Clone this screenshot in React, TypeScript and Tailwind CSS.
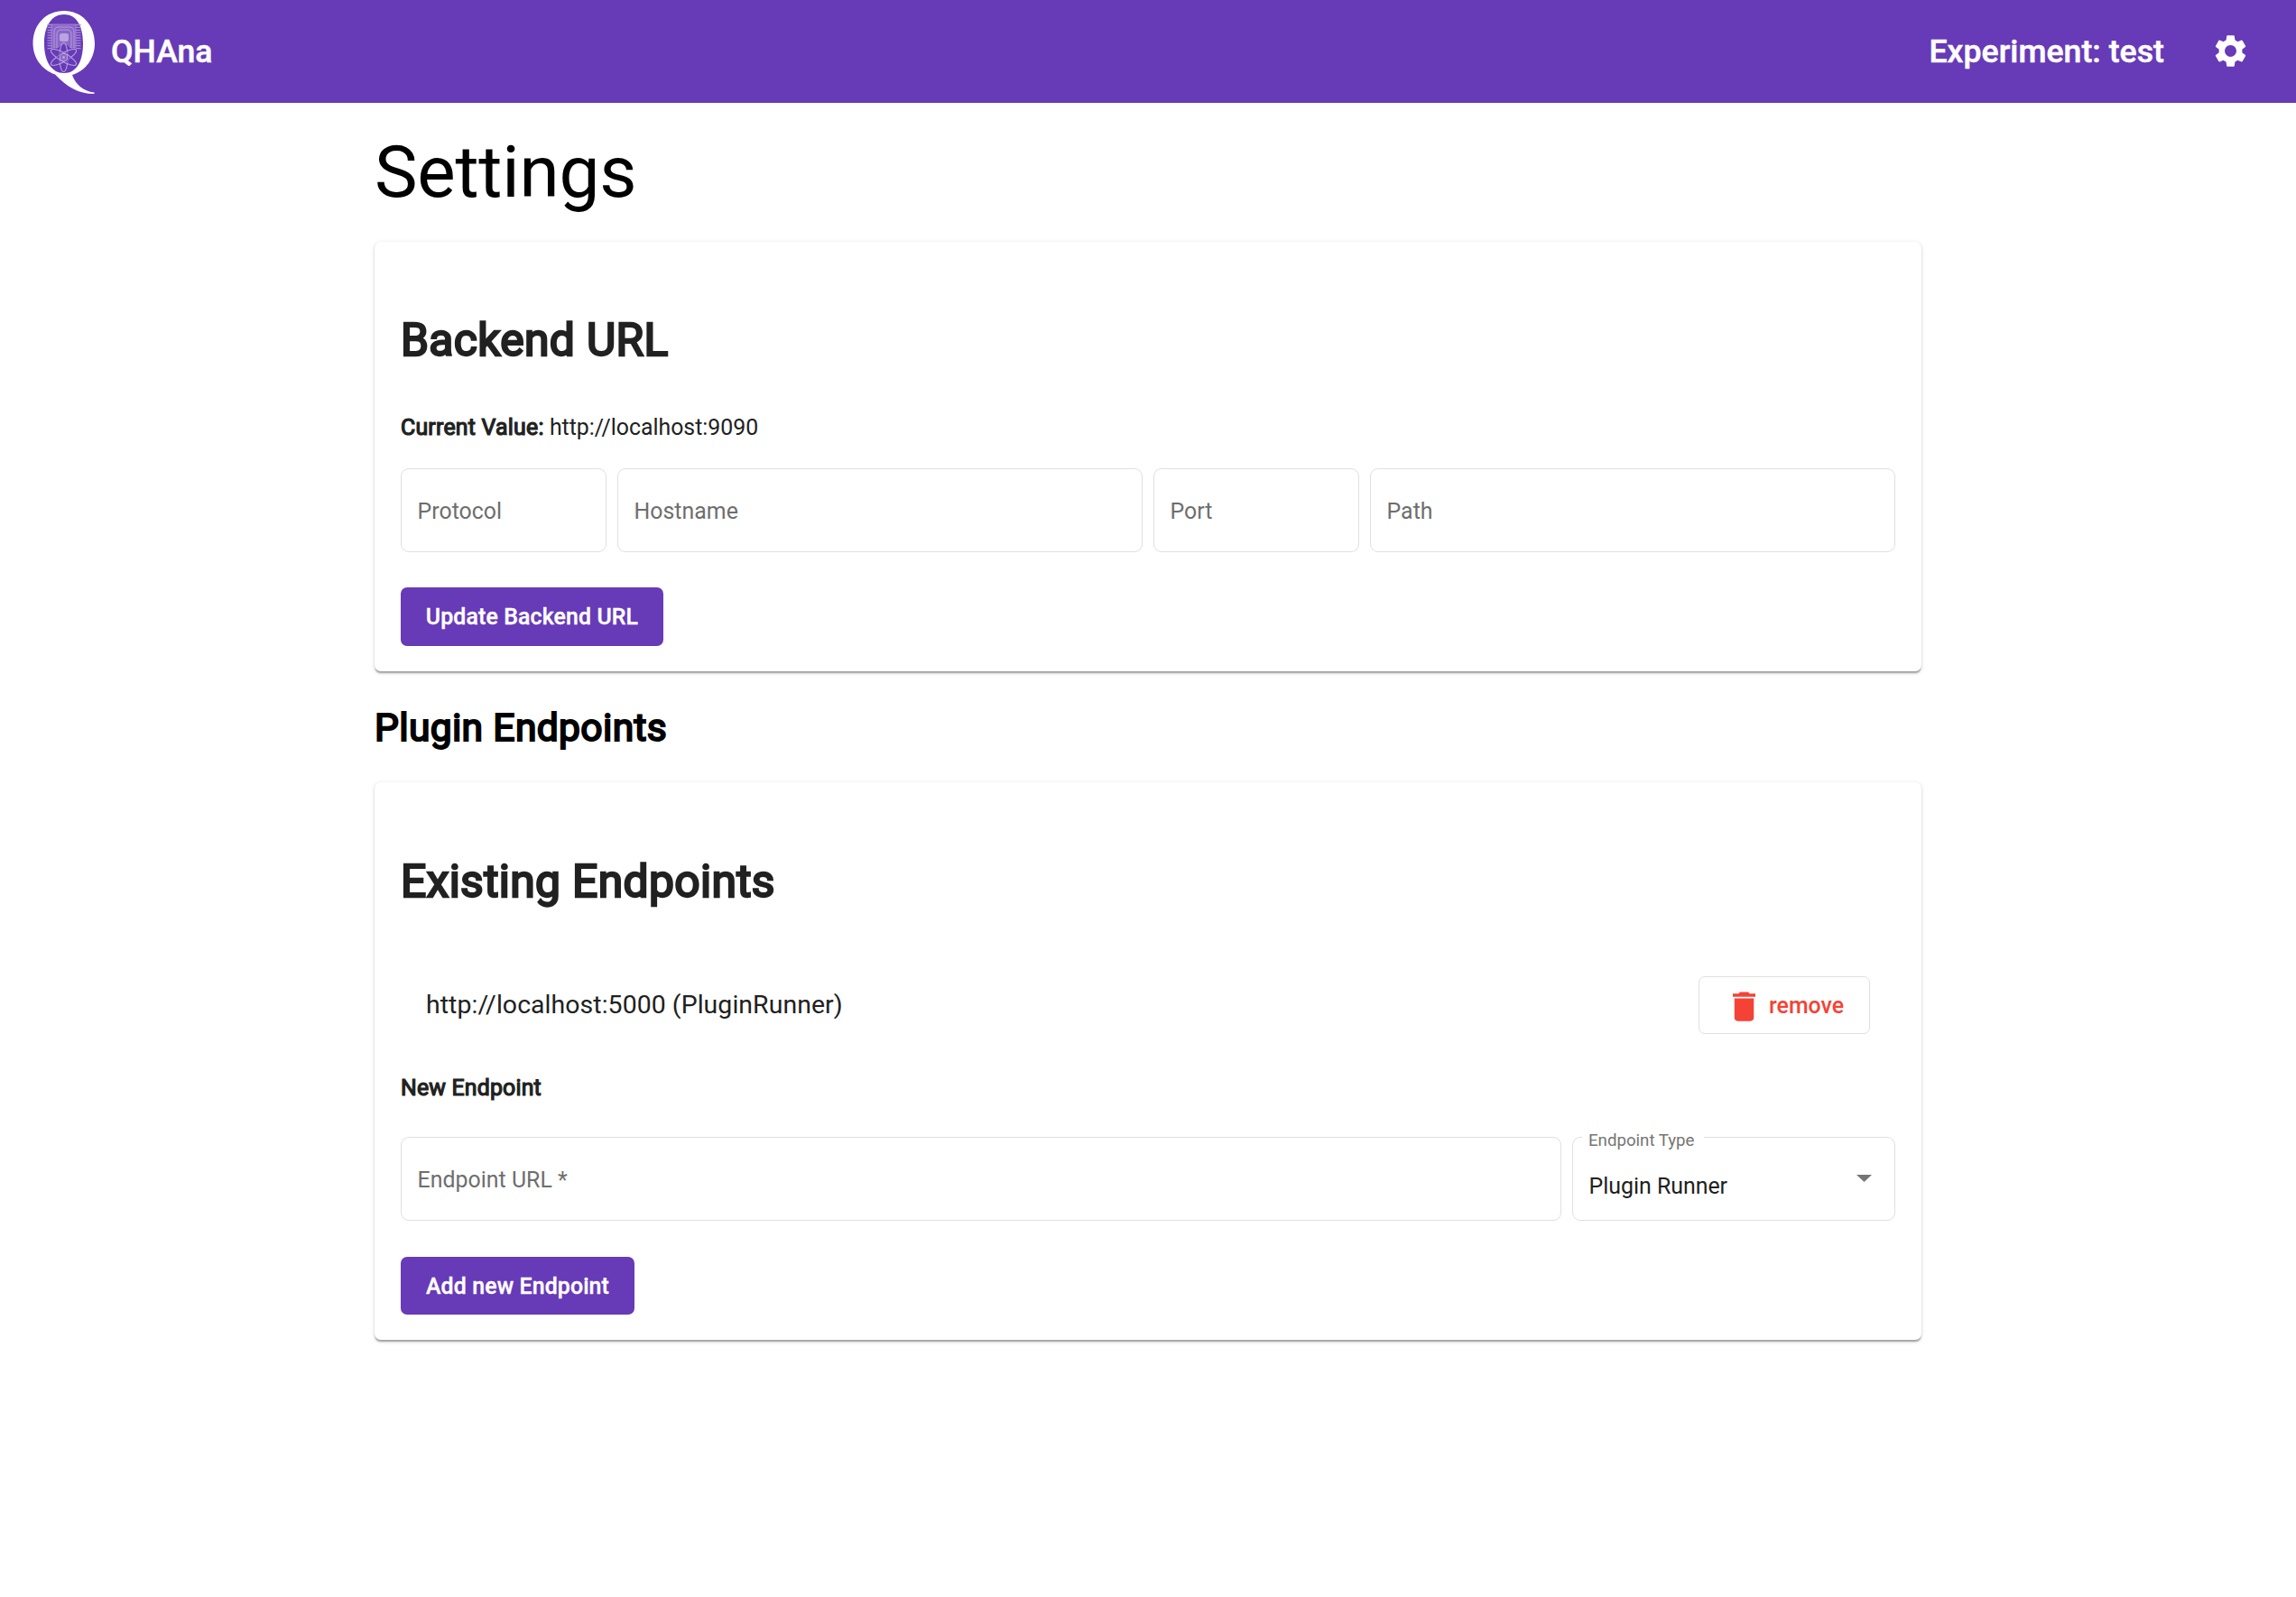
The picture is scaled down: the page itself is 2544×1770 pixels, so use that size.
import React from "react";
import { MdDelete, MdSettings } from "react-icons/md";

const orbitAngles = [0, 60, 120];
const pinRows = [0, 1, 2, 3, 4, 5, 6, 7, 8, 9];

function Logo() {
  return (
    <svg className="block h-[104px] w-[84px]" viewBox="30 5 84 104" fill="none">
      <path
        fill="#fff"
        fillRule="evenodd"
        d="M71 12C90 12 105 27 105 48C105 64 96 78 80 83C84 94 92 101 104.500 102.500V104C86 104 74 96 61 82.500C46 77 36.500 64 36.500 48C36.500 27 51 12 71 12ZM71 16C57 16 49 29 49 48C49 68 57 81 71 81C85 81 92 68 92 48C92 29 85 16 71 16Z"
      />
      <g stroke="#a78bd6">
        <path d="M57 27h27v26h-6l-3-4h-8l-3 4h-7z" fill="#8a66c8" strokeWidth="0.800" />
        <path
          d="M60 53V35q0-5 5-5h12q5 0 5 5v18M63 53V38q0-5 5-5h6q5 0 5 5v15"
          stroke="#b9a3e0"
          strokeWidth="0.900"
        />
        <rect x="66" y="37" width="10" height="9" rx="2.500" fill="#b9a3e0" stroke="none" />
        {pinRows.map((i) => (
          <path
            key={i}
            d={`M52.500 ${27.500 + i * 2.900}h5M84 ${27.500 + i * 2.900}h5.500`}
            strokeWidth="1.300"
          />
        ))}
      </g>
      <g stroke="#b9a3e0" strokeWidth="1.100">
        {orbitAngles.map((a) => (
          <ellipse
            key={a}
            cx="70.500"
            cy="63.500"
            rx="4.600"
            ry="16"
            fill="#673ab7"
            fillOpacity="0.500"
            transform={`rotate(${a} 70.500 63.500)`}
          />
        ))}
        <circle cx="70.500" cy="63.500" r="4.200" fill="#8a66c8" />
        <circle cx="70.500" cy="63.500" r="1.500" fill="#b9a3e0" stroke="none" />
      </g>
    </svg>
  );
}

function Field({ label, className }: { label: string; className: string }) {
  return (
    <div
      className={`flex h-[93px] items-center rounded-[9px] border border-[#e0e0e0] pl-[17.500px] text-[24.890px] text-[#6e6e6e] ${className}`}
    >
      <span className="mt-[2px] tracking-[0.001em]">{label}</span>
    </div>
  );
}

const card =
  "flex flex-col rounded-[7px] bg-white px-[29px] text-[#212121] shadow-[0_3.500px_1.800px_-1.800px_rgba(0,0,0,0.2),0_1.800px_1.800px_0_rgba(0,0,0,0.14),0_1.800px_5.300px_0_rgba(0,0,0,0.12)]";
const mediumText = "font-medium [-webkit-text-stroke:0.015em_currentColor]";
const primary = `flex items-center justify-center self-start rounded-[7px] bg-[#673ab7] pt-px text-[24.890px] tracking-[0.005em] text-white ${mediumText}`;
const heavy = "[-webkit-text-stroke:0.048em_currentColor] tracking-[0.007em]";

export default function App() {
  return (
    <div className="min-h-[1770px] bg-white font-['Roboto',sans-serif] text-black">
      <header
        className={`flex h-[114px] items-center bg-[#673ab7] pl-[30px] pr-[51px] text-[35.560px] tracking-[0.002em] text-white ${mediumText}`}
      >
        <Logo />
        <span className="ml-[9px] mt-[2px]">QHAna</span>
        <span className="ml-auto mt-[2px]">Experiment: test</span>
        <MdSettings className="mb-px ml-[52px] size-[43px]" strokeWidth={0} />
      </header>
      <main className="mx-auto w-[1714px]">
        <h1 className="flex h-[154px] items-center text-[80px] leading-none tracking-[-0.003em]">
          <span>Settings</span>
        </h1>
        <section className={`h-[476px] ${card}`}>
          <h2 className={`mt-[79px] text-[49.780px] leading-[60px] ${heavy}`}>Backend URL</h2>
          <p className="mt-[51px] text-[24.890px] leading-[32px]">
            <b className="font-normal tracking-[0.009em] [-webkit-text-stroke:0.048em_currentColor]">Current Value:</b>{" "}
            http://localhost:9090
          </p>
          <div className="mt-[29px] flex gap-3">
            <Field label="Protocol" className="w-[228px]" />
            <Field label="Hostname" className="w-[582px]" />
            <Field label="Port" className="w-[228px]" />
            <Field label="Path" className="w-[582px]" />
          </div>
          <button className={`mt-[39px] h-[65px] w-[291px] ${primary}`}>Update Backend URL</button>
        </section>
        <h2 className={`flex h-[123px] items-center pt-px text-[42.670px] leading-none ${heavy}`}>
          <span>Plugin Endpoints</span>
        </h2>
        <section className={`h-[618px] ${card}`}>
          <h2 className={`mt-[80px] text-[49.780px] leading-[60px] ${heavy}`}>Existing Endpoints</h2>
          <div className="mt-[75px] flex h-[64px] items-center justify-between px-[28px]">
            <span className="text-[28.440px] tracking-[0.002em]">http://localhost:5000 (PluginRunner)</span>
            <button className="flex h-[64px] w-[190px] items-center rounded-[7px] border border-[#e0e0e0] pl-[28px] pt-[2px] text-[24.890px] font-medium text-[#f44336]">
              <MdDelete className="size-[43px]" strokeWidth={0} />
              <span className="ml-[6px]">remove</span>
            </button>
          </div>
          <h3 className={`mt-[44px] text-[24.890px] leading-[32px] ${heavy}`}>New Endpoint</h3>
          <div className="mt-[38px] flex gap-3">
            <Field label="Endpoint URL *" className="w-[1286px]" />
            <div className="relative flex h-[93px] w-[358px] items-center justify-between rounded-[9px] border border-[#e0e0e0] pl-[17.500px] pr-[25px]">
              <span className="absolute -top-[8px] left-[10px] bg-white pl-[7px] pr-[11px] text-[18.670px] leading-[22px] text-[#757575]">
                Endpoint Type
              </span>
              <span className="mt-[17px] text-[24.890px]">Plugin Runner</span>
              <svg className="mb-px h-[8px] w-[17px]" viewBox="0 0 17 8">
                <path d="M0 0h17L8.500 8z" fill="#757575" />
              </svg>
            </div>
          </div>
          <button className={`mt-[40px] h-[64px] w-[259px] ${primary}`}>Add new Endpoint</button>
        </section>
      </main>
    </div>
  );
}
